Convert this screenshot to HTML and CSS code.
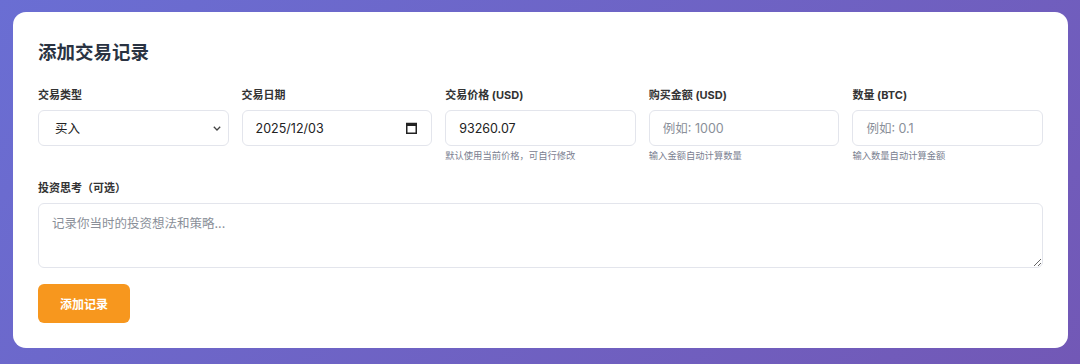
FILE: index.html
```html
<!DOCTYPE html>
<html lang="zh-CN">
<head>
  <meta charset="UTF-8" />
  <title>添加交易记录</title>
  <link rel="stylesheet" href="styles.css">
</head>
<body>
  <div class="card">
    <h2>添加交易记录</h2>

    <div class="form-row">
      <div class="form-group">
        <label for="tipo">交易类型</label>
        <div class="campo">
          <select id="tipo">
            <option>买入</option>
            <option>卖出</option>
          </select>
          <svg class="seta" width="8" height="5" viewBox="0 0 8 5"><path d="M0.8 0.8l3.2 3.2 3.2-3.2" fill="none" stroke="#444" stroke-width="1.3"/></svg>
        </div>
      </div>
      <div class="form-group">
        <label for="data">交易日期</label>
        <div class="campo">
          <input id="data" type="text" value="2025/12/03">
          <svg class="calendario" width="11" height="12" viewBox="0 0 11 12"><rect x="0.75" y="1.5" width="9.5" height="9.75" fill="none" stroke="#222" stroke-width="1.5"/><rect x="0.75" y="1.5" width="9.5" height="2.5" fill="#222"/></svg>
        </div>
      </div>
      <div class="form-group">
        <label for="preco">交易价格 (USD)</label>
        <input id="preco" type="text" value="93260.07">
        <div class="dica">默认使用当前价格，可自行修改</div>
      </div>
      <div class="form-group">
        <label for="valor">购买金额 (USD)</label>
        <input id="valor" type="text" placeholder="例如: 1000">
        <div class="dica">输入金额自动计算数量</div>
      </div>
      <div class="form-group">
        <label for="qtd">数量 (BTC)</label>
        <input id="qtd" type="text" placeholder="例如: 0.1">
        <div class="dica">输入数量自动计算金额</div>
      </div>
    </div>

    <div class="form-group nota">
      <label for="nota">投资思考（可选）</label>
      <textarea id="nota" placeholder="记录你当时的投资想法和策略..."></textarea>
    </div>

    <button class="btn-add">添加记录</button>
  </div>
</body>
</html>
```

FILE: styles.css
```css
* { box-sizing: border-box; }
body {
  margin: 0;
  padding: 12px 12px 16px 13px;
  height: 364px;
  font-family: Inter, "Noto Sans CJK SC", sans-serif;
  background: linear-gradient(135deg, #6a6ed3 0%, #7258b6 100%);
  color: #2d3748;
  overflow: hidden;
}
.card {
  background: white;
  border-radius: 13px;
  padding: 27px 25px 25px;
  width: 1055px;
  height: 336px;
}
h2 {
  margin: 0 0 22px;
  font-size: 18.5px;
  line-height: 26px;
  font-weight: 700;
  color: #2a3342;
}
.form-row {
  display: grid;
  grid-template-columns: repeat(5, 1fr);
  gap: 13px;
  margin-bottom: 17px;
}
.form-group label {
  display: block;
  font-size: 11px;
  line-height: 16px;
  font-weight: 700;
  color: #333;
  margin-bottom: 7px;
}
.campo { position: relative; }
input, select, textarea {
  width: 100%;
  font-family: Inter, "Noto Sans CJK SC", sans-serif;
  font-size: 12.5px;
  color: #222;
  border: 1.5px solid #e3e5ec;
  border-radius: 6px;
  background: white;
  outline: none;
}
input, select {
  height: 36px;
  padding: 0 13px;
}
select {
  appearance: none;
  padding-left: 16px;
}
input::placeholder, textarea::placeholder { color: #8a8f99; }
.seta {
  position: absolute;
  right: 8px;
  top: 16px;
  pointer-events: none;
}
.calendario {
  position: absolute;
  right: 15px;
  top: 12px;
}
.dica {
  font-size: 9.3px;
  line-height: 14px;
  color: #7a8090;
  margin-top: 3px;
}
.nota { margin-bottom: 16px; }
textarea {
  display: block;
  height: 65px;
  padding: 9px 13px;
  resize: vertical;
}
.btn-add {
  width: 92px;
  height: 39px;
  border: none;
  border-radius: 6px;
  background: #f7971e;
  color: white;
  font-family: Inter, "Noto Sans CJK SC", sans-serif;
  font-size: 12px;
  font-weight: 700;
  cursor: pointer;
}
.btn-add:hover { background: #e8860f; }
```
